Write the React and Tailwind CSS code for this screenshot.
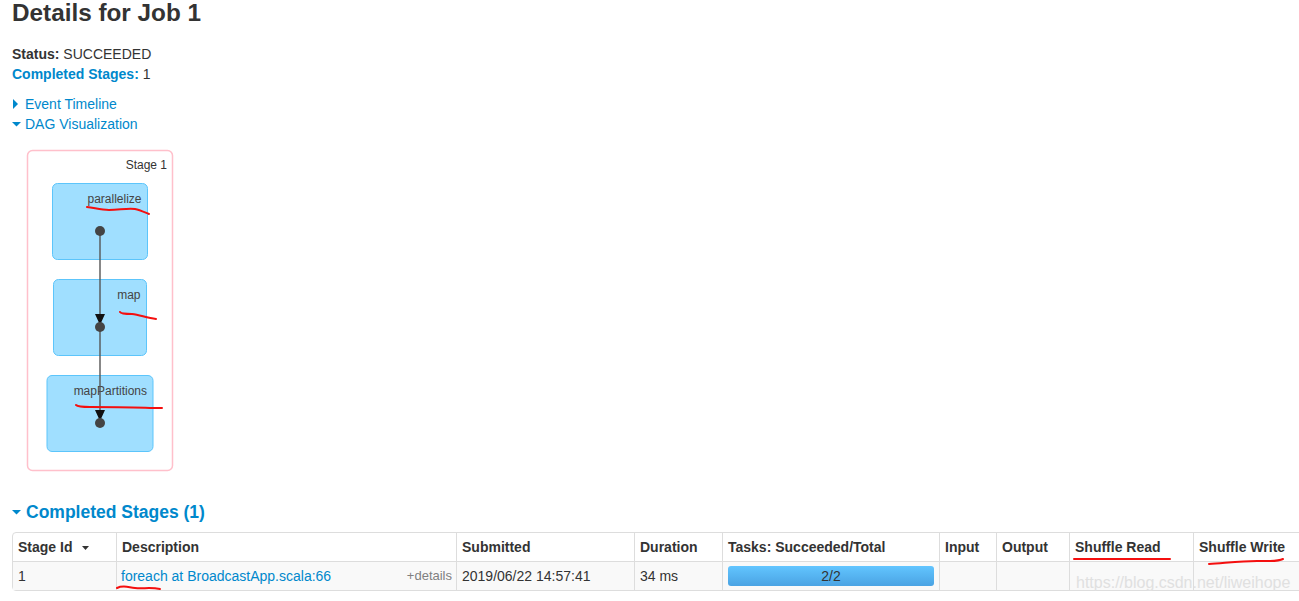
const font = { fontFamily: '"Liberation Sans", Arial, sans-serif' };

function DagBox({ x, y, w, h, label }) {
  return (
    <g>
      <rect x={x + 0.5} y={y + 0.5} width={w} height={h} rx="5" fill="#a0dfff" stroke="#5cc5fb" strokeWidth="1" />
      <text x={x + w - 5.5} y={y + 20} textAnchor="end" fontSize="12" fill="#444">
        {label}
      </text>
    </g>
  );
}

function DagGraph() {
  return (
    <svg width="180" height="340" viewBox="0 0 180 340" className="block" style={font}>
      <rect x="27.5" y="10.5" width="145" height="320" rx="5" fill="#fff" stroke="#ffc0cb" strokeWidth="1.5" />
      <text x="167" y="29" textAnchor="end" fontSize="12" fill="#333">Stage 1</text>
      <DagBox x={52} y={43} w={95} h={76} label="parallelize" />
      <DagBox x={53} y={139} w={93} h={76} label="map" />
      <DagBox x={46.500} y={235} w={106} h={76} label="mapPartitions" />
      <path d="M100 91V283" stroke="#555" strokeWidth="1.4" fill="none" />
      <path d="M95 174h10l-5 11zM95 270h10l-5 11z" fill="#111" />
      <circle cx="100" cy="91" r="5" fill="#444" />
      <circle cx="100" cy="187" r="5" fill="#444" />
      <circle cx="100" cy="283" r="5" fill="#444" />
    </svg>
  );
}

function Caret({ open }) {
  return (
    <svg width="10" height="10" viewBox="0 0 10 10" className="shrink-0">
      {open ? <path d="M0 3h9L4.500 7.500z" fill="#0088cc" /> : <path d="M1 0l5 5-5 5z" fill="#0088cc" />}
    </svg>
  );
}

function Scribbles() {
  return (
    <svg width="1299" height="601" viewBox="0 0 1299 601" className="absolute left-0 top-0 pointer-events-none">
      <g fill="none" stroke="#f40f0f" strokeWidth="2" strokeLinecap="round">
        <path d="M87 207c8 1 14 3 22 3 10 0 18-2 26-1 5 1 9 3 14 5" />
        <path d="M120 312c1 2 8 2 12 2 8 1 15 4 24 5" />
        <path d="M76 405c2 2 8 2 14 2 22 0 42 0 60 1h12" />
        <path d="M117 588c6-3 10-1 18 0 8 1 15-1 25 1" />
        <path d="M1074 559h96" />
        <path d="M1209 564c16-1 32-3 48-3 10 0 20 1 26-2" />
      </g>
    </svg>
  );
}

const headers = [
  ["Stage Id", "w-[103px]"],
  ["Description", "w-[340px]"],
  ["Submitted", "w-[178px]"],
  ["Duration", "w-[88px]"],
  ["Tasks: Succeeded/Total", "w-[217px]"],
  ["Input", "w-[57px]"],
  ["Output", "w-[73px]"],
  ["Shuffle Read", "w-[124px]"],
  ["Shuffle Write", "w-[120px]"],
];

export default function App() {
  return (
    <div className="relative h-[601px] w-[1299px] overflow-hidden bg-white text-[14px] text-[#333]" style={font}>
      <div className="pl-3">
        <h3 className="text-[24.300px] leading-[26px] font-bold text-[#333]">Details for Job 1</h3>
        <ul className="mt-[18px] leading-[20px]">
          <li><span className="font-bold">Status:</span> SUCCEEDED</li>
          <li><span className="font-bold text-[#0088cc]">Completed Stages:</span> 1</li>
        </ul>
        <div className="mt-[10px] leading-[20px] text-[#0088cc]">
          <div className="flex items-center gap-[3px]"><Caret /><span>Event Timeline</span></div>
          <div className="flex items-center gap-[3px]"><Caret open /><span>DAG Visualization</span></div>
        </div>
      </div>

      <div className="mt-[6px]">
        <DagGraph />
      </div>

      <div className="mt-[22px] flex items-center gap-[4px] pl-3 text-[17.500px] leading-[20px] font-bold text-[#0088cc]">
        <Caret open />
        <span>Completed Stages (1)</span>
      </div>

      <table className="mt-[10px] ml-3 w-[1300px] table-fixed border-separate border-spacing-0 rounded-[4px] border border-[#dddddd] text-[14px]">
        <thead>
          <tr>
            {headers.map(([name, width], i) => (
              <th
                key={name}
                className={`${width} h-[28px] px-[5px] text-left font-bold ${i > 0 ? "border-l border-[#dddddd]" : ""}`}
              >
                {name}
                {i === 0 && (
                  <svg width="7" height="4" viewBox="0 0 7 4" className="ml-[10px] inline-block align-[2px]">
                    <path d="M0 0h7L3.500 4z" fill="#333" />
                  </svg>
                )}
              </th>
            ))}
          </tr>
        </thead>
        <tbody>
          <tr className="bg-[#f9f9f9]">
            <td className="h-[29px] border-t border-[#dddddd] px-[5px]">1</td>
            <td className="border-t border-l border-[#dddddd] px-[4px]">
              <div className="flex items-center justify-between">
                <span className="text-[#0088cc]">foreach at BroadcastApp.scala:66</span>
                <span className="text-[13px] text-[#808080]">+details</span>
              </div>
            </td>
            <td className="border-t border-l border-[#dddddd] px-[5px]">2019/06/22 14:57:41</td>
            <td className="border-t border-l border-[#dddddd] px-[5px]">34 ms</td>
            <td className="border-t border-l border-[#dddddd] px-[5px]">
              <div className="h-[20px] rounded-[3px] bg-gradient-to-b from-[#62c5ff] to-[#4aa3e3] text-center leading-[20px]">2/2</div>
            </td>
            <td className="border-t border-l border-[#dddddd]"></td>
            <td className="border-t border-l border-[#dddddd]"></td>
            <td className="border-t border-l border-[#dddddd]"></td>
            <td className="border-t border-l border-[#dddddd]"></td>
          </tr>
        </tbody>
      </table>

      <Scribbles />
      <div className="absolute top-[573px] left-[1076px] text-[16px] leading-[20px] text-[#e0e0e0]">https://blog.csdn.net/liweihope</div>
    </div>
  );
}
